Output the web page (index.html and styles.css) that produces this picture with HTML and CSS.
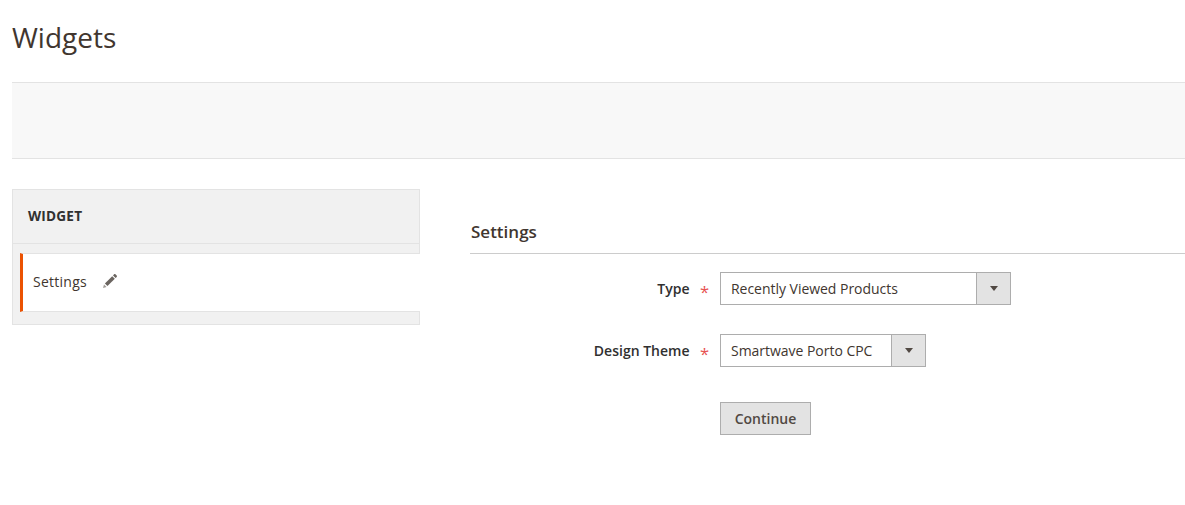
FILE: index.html
```html
<!DOCTYPE html>
<html lang="en">
<head>
<meta charset="utf-8">
<title>Widgets</title>
<link rel="stylesheet" href="styles.css">
</head>
<body>
<h1 class="page-title">Widgets</h1>
<div class="actions-bar"></div>
<div class="columns">
  <aside class="side">
    <div class="side-title">WIDGET</div>
    <div class="side-body">
      <div class="side-item">
        <span class="side-link">Settings</span>
        <svg class="pencil" width="16" height="16" viewBox="0 0 16 16" aria-hidden="true">
          <path d="M1 15l1-3.6 2.6 2.6z" fill="#a09b96"/>
          <path d="M2.9 10.5L10.2 3.2l2.6 2.6-7.3 7.3z" fill="#6b6560"/>
          <path d="M11 2.4l1.1-1.1c.4-.4 .9-.4 1.3 0l1.3 1.3c.4.4 .4.9 0 1.3l-1.1 1.1z" fill="#6b6560"/>
        </svg>
      </div>
    </div>
  </aside>
  <main class="content">
    <h2 class="section-title">Settings</h2>
    <form class="form">
      <div class="field">
        <label class="label">Type</label>
        <span class="req">*</span>
        <div class="select wide"><span class="value">Recently Viewed Products</span><span class="arrow"></span></div>
      </div>
      <div class="field">
        <label class="label">Design Theme</label>
        <span class="req">*</span>
        <div class="select narrow"><span class="value">Smartwave Porto CPC</span><span class="arrow"></span></div>
      </div>
      <div class="field submit">
        <button type="button" class="btn">Continue</button>
      </div>
    </form>
  </main>
</div>
</body>
</html>
```
FILE: styles.css
```css
* { box-sizing: border-box; }
html, body { margin: 0; padding: 0; }
body {
  height: 505px;
  overflow: hidden;
  padding-left: 12px;
  background: #fff;
  color: #303030;
  font-family: "Open Sans", sans-serif;
  font-size: 14px;
}
.page-title {
  margin: 0;
  padding-top: 18px;
  height: 82px;
  font-size: 28px;
  line-height: 38px;
  font-weight: 400;
  color: #41362f;
}
.actions-bar {
  height: 77px;
  background: #f8f8f8;
  border-top: 1px solid #e3e3e3;
  border-bottom: 1px solid #e3e3e3;
}
.columns {
  display: flex;
  margin-top: 30px;
}
.side {
  width: 408px;
  flex: none;
  height: 136px;
  background: #f1f1f1;
  border: 1px solid #e3e3e3;
}
.side-title {
  height: 54px;
  padding-left: 15px;
  border-bottom: 1px solid #e3e3e3;
  font-size: 13.6px;
  font-weight: 700;
  line-height: 52px;
  letter-spacing: .2px;
  color: #303030;
}
.side-body { padding-top: 9px; }
.side-item {
  display: flex;
  align-items: center;
  gap: 15px;
  height: 59px;
  margin-left: 7px;
  margin-right: -1px;
  padding-left: 10px;
  padding-bottom: 3px;
  background: #fff;
  border-left: 3px solid #eb5202;
  border-bottom: 1px solid #e3e3e3;
  border-top: 1px solid #e3e3e3;
  color: #41362f;
}
.side-link { letter-spacing: .25px; }
.pencil { display: block; }
.content {
  flex: 1;
  min-width: 0;
  margin-left: 50px;
  padding-top: 30px;
}
.section-title {
  margin: 0;
  height: 35px;
  border-bottom: 1px solid #cccccc;
  padding-left: 1px;
  font-size: 17px;
  line-height: 25px;
  font-weight: 600;
  color: #41362f;
}
.form { padding-top: 18px; }
.field {
  display: flex;
  align-items: center;
  height: 33px;
  margin-bottom: 29px;
}
.label {
  width: 220px;
  flex: none;
  padding-right: .5px;
  text-align: right;
  font-weight: 600;
  color: #303030;
}
.req {
  width: 30px;
  flex: none;
  padding-left: 10px;
  padding-top: 6px;
  color: #e22626;
  opacity: .8;
  font-size: 16.5px;
  line-height: 20px;
}
.select {
  display: flex;
  height: 33px;
  background: #fff;
  border: 1px solid #adadad;
  color: #41362f;
}
.wide { width: 291px; }
.narrow { width: 206px; }
.value {
  flex: 1;
  padding-left: 10px;
  line-height: 31px;
  letter-spacing: -.03px;
}
.arrow {
  position: relative;
  width: 34px;
  flex: none;
  background: #e3e3e3;
  border-left: 1px solid #adadad;
}
.arrow::after {
  content: "";
  position: absolute;
  left: 13px;
  top: 13px;
  border: 4px solid transparent;
  border-top: 5px solid #514943;
  border-bottom: 0;
}
.submit {
  padding-left: 250px;
  margin-top: 35px;
}
.btn {
  width: 91px;
  height: 33px;
  padding: 0;
  background: #e3e3e3;
  border: 1px solid #adadad;
  color: #514943;
  font-family: inherit;
  font-size: 14px;
  font-weight: 600;
}
```
